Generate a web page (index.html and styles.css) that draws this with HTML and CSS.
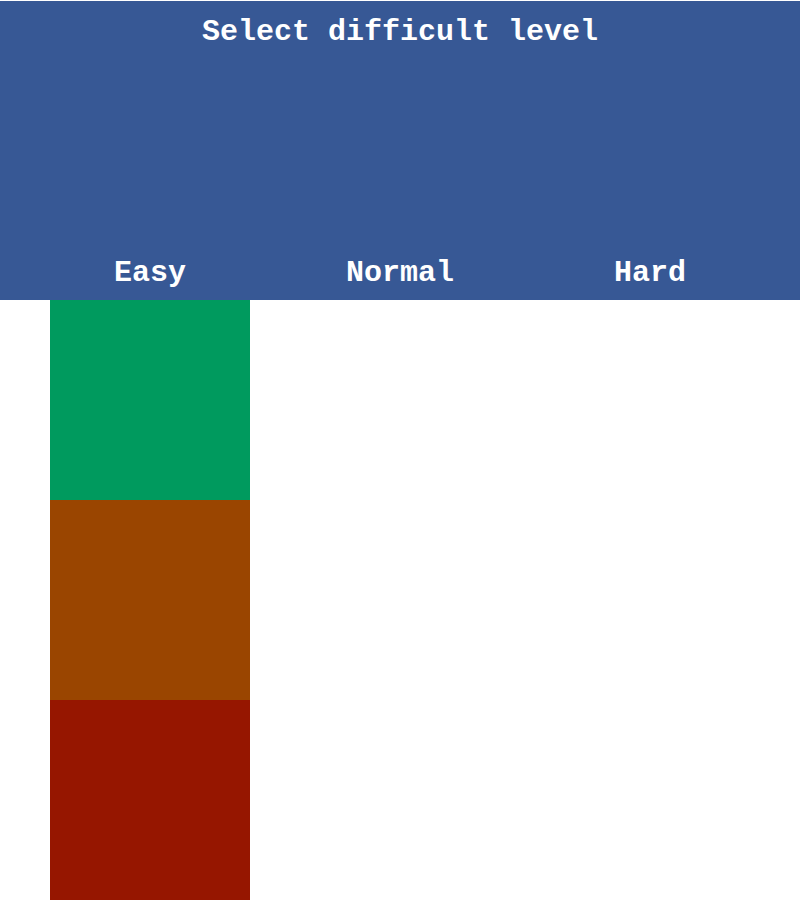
FILE: index.html
```html
<!DOCTYPE html>
<html lang="en">
<head>
    <meta charset="UTF-8">
    <meta name="viewport" content="width=device-width, initial-scale=1.0">
    <title>Select difficult level</title>
    <link rel="stylesheet" href="styles.css">
</head>
<body>
    <div id="header">
        <h1>Select difficult level</h1>
        <div class="levels">
            <div class="level">Easy</div>
            <div class="level">Normal</div>
            <div class="level">Hard</div>
        </div>
    </div>
    <div class="levels">
        <div class="swatches">
            <div class="swatch easy"></div>
            <div class="swatch normal"></div>
            <div class="swatch hard"></div>
        </div>
        <div class="swatches"></div>
        <div class="swatches"></div>
    </div>
</body>
</html>
```

FILE: styles.css
```css
body {
    font-family: "Liberation Mono", "Courier New", monospace;
    color: white;
    background-color: white;
    margin: 0;
    padding-top: 1px;
}
#header {
    background-color: #375895;
    height: 299px;
    box-sizing: border-box;
    padding: 14px 0 10px;
    display: flex;
    flex-direction: column;
    justify-content: space-between;
}
h1 {
    margin: 0;
    font-size: 30px;
    line-height: 34px;
    text-align: center;
}
.levels {
    display: flex;
    justify-content: space-evenly;
}
.level {
    width: 200px;
    text-align: center;
    font-size: 30px;
    font-weight: bold;
    line-height: 34px;
}
.swatches {
    width: 200px;
    display: flex;
    flex-direction: column;
}
.swatch {
    height: 200px;
}
.easy {
    background-color: #009a5e;
}
.normal {
    background-color: #9a4500;
}
.hard {
    background-color: #961600;
}
```
